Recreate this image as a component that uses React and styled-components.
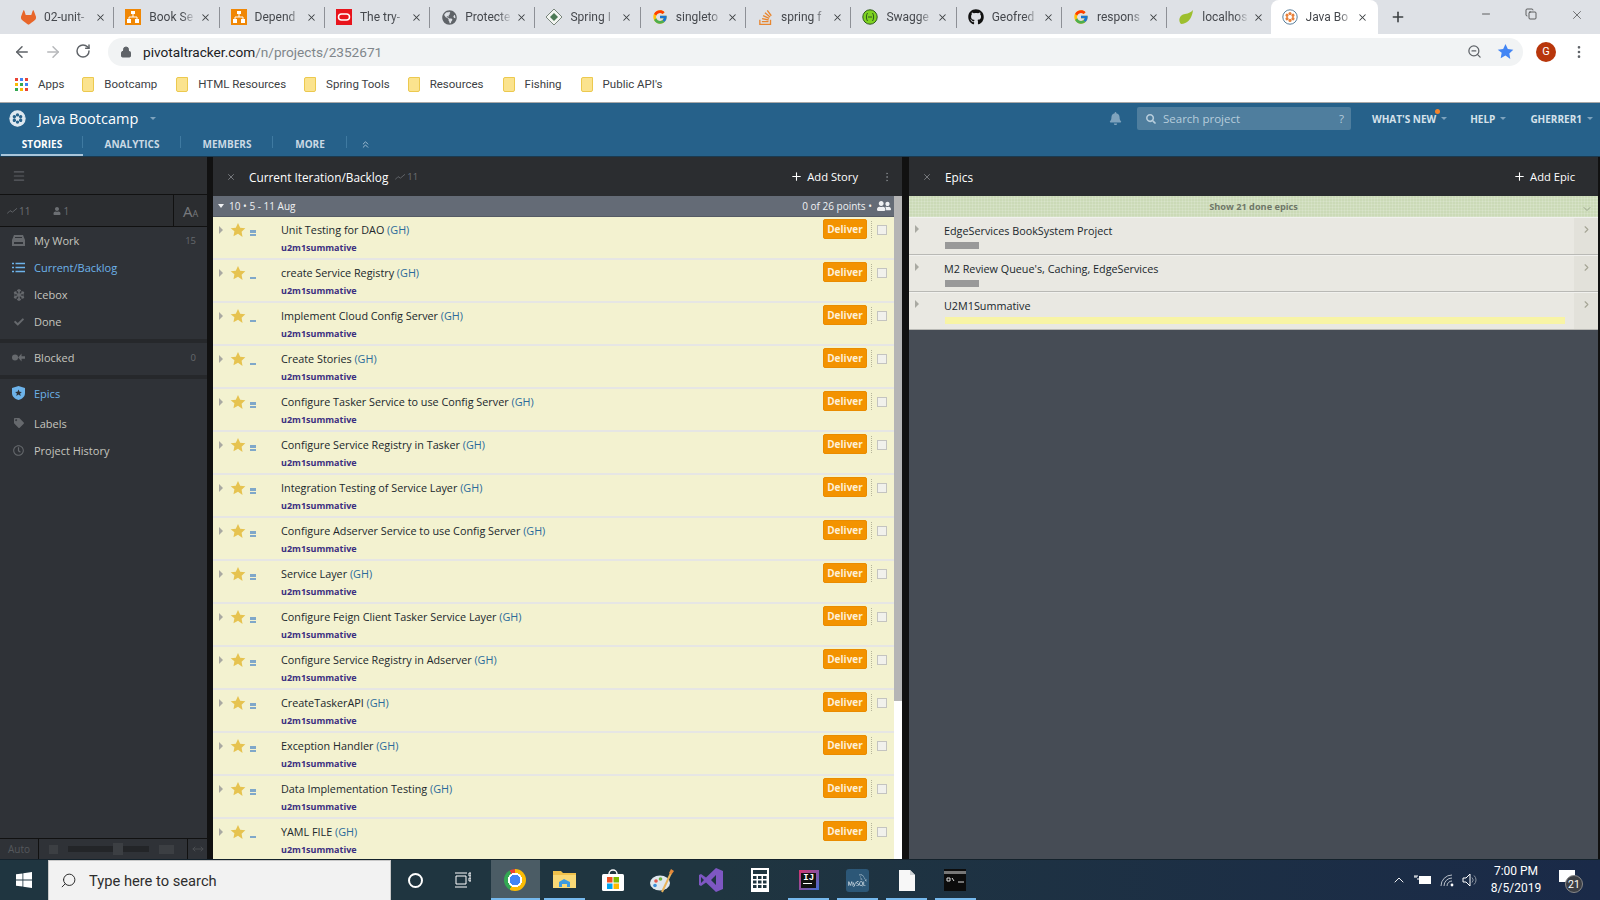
import React from 'react';
import styled, { createGlobalStyle } from 'styled-components';
import { FaGithub, FaGlobeAmericas, FaUserFriends, FaUser, FaBell, FaCheck, FaTag, FaRegClock, FaSearch, FaSnowflake } from 'react-icons/fa';
import { FcGoogle } from 'react-icons/fc';
import { SiGitlab, SiStackoverflow, SiMysql } from 'react-icons/si';
import { ArrowLeft, ArrowRight, RotateCw, Lock, ZoomOut, MoreVertical, Plus, X, Minus, Copy, Menu, ChevronDown, ChevronRight, ChevronsUp, ChevronUp, MoveHorizontal, Search } from 'lucide-react';

const GlobalStyle = createGlobalStyle`
  html, body { margin: 0; padding: 0; background: #fff; }
  * { box-sizing: border-box; }
  #root { width: 1600px; height: 900px; overflow: hidden; }
`;

const Root = styled.div`
  width: 1600px;
  height: 900px;
  display: flex;
  flex-direction: column;
  overflow: hidden;
  font-family: 'Open Sans', 'Liberation Sans', sans-serif;
`;

/* ---- browser chrome ---- */
const TabStrip = styled.div`
  height: 34px;
  flex: none;
  background: #dee1e6;
  display: flex;
  align-items: stretch;
  padding-left: 9px;
  font-family: Roboto, 'Liberation Sans', sans-serif;
`;

const Tab = styled.div`
  position: relative;
  width: ${({ $active }) => ($active ? '107px' : '105.3px')};
  margin-left: ${({ $active }) => ($active ? '-2px' : '0')};
  display: flex;
  align-items: center;
  padding-left: 11px;
  background: ${({ $active }) => ($active ? '#fff' : 'transparent')};
  border-radius: 8px 8px 0 0;
  color: #45484d;

  &::after {
    content: '';
    display: ${({ $sep }) => ($sep ? 'block' : 'none')};
    position: absolute;
    right: 0;
    top: 7px;
    bottom: 6px;
    width: 1px;
    background: #8d9096;
  }
`;

const Favicon = styled.span`
  width: 16px;
  height: 16px;
  flex: none;
  display: flex;
  align-items: center;
  justify-content: center;
`;

const TabTitle = styled.span`
  width: 47px;
  margin-left: 8px;
  font-size: 12px;
  white-space: nowrap;
  overflow: hidden;
  -webkit-mask-image: linear-gradient(to right, #000 70%, transparent 100%);
  mask-image: linear-gradient(to right, #000 70%, transparent 100%);
`;

const TabClose = styled.span`
  margin-left: 4px;
  display: flex;
  color: #3c4043;
`;

const NewTab = styled.span`
  margin-left: 12px;
  display: flex;
  align-items: center;
  color: #3c4043;
`;

const WindowControls = styled.div`
  margin-left: auto;
  display: flex;
  align-items: flex-start;
  padding: 8px 16px 0 0;
  gap: 33px;
  color: #333;
`;

const AddressRow = styled.div`
  height: 34px;
  flex: none;
  background: #fff;
  display: flex;
  align-items: center;
  padding: 1px 12px 0;
`;

const NavButtons = styled.div`
  display: flex;
  gap: 13px;
  width: 96px;
  padding-left: 1px;
  color: #5f6368;
`;

const NavButton = styled.span`
  display: flex;
  color: ${({ $off }) => ($off ? '#b6b8bb' : '#5f6368')};
`;

const Omnibox = styled.div`
  width: 1415px;
  height: 28px;
  border-radius: 14px;
  background: #f1f3f4;
  display: flex;
  align-items: center;
  padding: 0 8px 0 12px;
  font-family: Roboto, 'Liberation Sans', sans-serif;
  font-size: 13.65px;
  color: #202124;
`;

const Url = styled.span`
  margin-left: 11px;
  span { color: #80868b; }
`;

const OmniIcons = styled.div`
  margin-left: auto;
  display: flex;
  align-items: center;
  gap: 15px;
  padding-right: 1px;
`;

const Avatar = styled.span`
  width: 20px;
  height: 20px;
  border-radius: 50%;
  background: #b8360b;
  color: #fff;
  font: 11px Roboto, sans-serif;
  display: flex;
  align-items: center;
  justify-content: center;
  margin-left: 13px;
`;

const MoreButton = styled(MoreVertical)`
  margin-left: 15px;
`;

const BookmarkBar = styled.div`
  height: 35px;
  flex: none;
  background: #fff;
  border-bottom: 1px solid #a8a8a8;
  display: flex;
  align-items: center;
  padding: 0 0 2px 15px;
  font-family: Roboto, 'Liberation Sans', sans-serif;
  font-size: 11.5px;
  color: #3c4043;
`;

const AppsGrid = styled.span`
  width: 13px;
  height: 13px;
  display: grid;
  grid-template-columns: repeat(3, 3px);
  gap: 2px;
  margin-right: 10px;
  i { display: block; width: 3px; height: 3px; }
`;

const Bookmark = styled.span`
  display: flex;
  align-items: center;
  margin-left: ${({ $gap }) => $gap}px;
  white-space: nowrap;
`;

const FolderIcon = styled.span`
  width: 12px;
  height: 15px;
  margin-right: 10px;
  background: #fbe38e;
  border: 1px solid #ecc94f;
  border-radius: 2px 0 2px 2px;
`;

/* ---- tracker header ---- */
const Header = styled.div`
  height: 54px;
  flex: none;
  background: #26618a;
  display: flex;
  flex-direction: column;
  border-bottom: 1px solid #1a3a50;
`;

const HeaderTop = styled.div`
  height: 30px;
  display: flex;
  align-items: center;
  padding: 1px 0 0 9px;
`;

const ProjectTitle = styled.span`
  margin-left: 12px;
  font-size: 14.5px;
  color: #fff;
`;

const TinyCaret = styled.span`
  width: 0;
  height: 0;
  margin-left: ${({ $gap }) => $gap || 6}px;
  border-left: 3px solid transparent;
  border-right: 3px solid transparent;
  border-top: 3px solid #7ea3bd;
`;

const HeaderRight = styled.div`
  margin-left: auto;
  display: flex;
  align-items: center;
  color: #7fa3bd;
`;

const SearchBox = styled.div`
  width: 214px;
  height: 23px;
  margin-left: 15px;
  border-radius: 2px;
  background: #4f7e9e;
  display: flex;
  align-items: center;
  padding: 0 7px 0 9px;
  font-size: 11.5px;
  color: #b7cddc;
`;

const SearchLabel = styled.span`
  margin-left: 7px;
  flex: 1;
`;

const HeaderLink = styled.span`
  position: relative;
  display: flex;
  align-items: center;
  margin-left: ${({ $gap }) => $gap}px;
  font-size: 10px;
  font-weight: 700;
  color: #d5e1ea;
`;

const NoticeDot = styled.i`
  position: absolute;
  left: 63px;
  top: -3px;
  width: 5px;
  height: 5px;
  border-radius: 50%;
  background: #f5842b;
`;

const HeaderEnd = styled.span`
  width: 7px;
`;

const HeaderTabs = styled.div`
  height: 23px;
  display: flex;
  align-items: stretch;
  padding-left: 2px;
`;

const HeaderTab = styled.span`
  position: relative;
  width: ${({ $w }) => $w}px;
  margin-left: ${({ $active }) => ($active ? '-1px' : '0')};
  display: flex;
  align-items: center;
  justify-content: center;
  font-size: 10px;
  font-weight: 700;
  color: ${({ $active }) => ($active ? '#fff' : '#cbd9e4')};
  border-bottom: 2px solid ${({ $active }) => ($active ? '#a8c5da' : 'transparent')};

  &::after {
    content: '';
    position: absolute;
    right: 0;
    top: 3px;
    height: 12px;
    width: 1px;
    background: #3f7aa1;
  }
`;

const CollapseTab = styled.span`
  margin-left: 13px;
  display: flex;
  align-items: center;
  color: #a9c3d6;
`;

/* ---- main area ---- */
const Main = styled.div`
  flex: 1;
  min-height: 0;
  display: flex;
  background: #111;
`;

const Sidebar = styled.div`
  width: 207px;
  flex: none;
  background: #2f3237;
  display: flex;
  flex-direction: column;
  color: #c5c5bf;
  font-size: 11px;
`;

const SideTop = styled.div`
  height: 38px;
  flex: none;
  background: #2c2e31;
  display: flex;
  align-items: center;
  padding-left: 12px;
  color: #5c5f64;
  border-bottom: 1px solid #111;
`;

const SideStats = styled.div`
  height: 32px;
  flex: none;
  display: flex;
  background: #2b2d30;
  border-bottom: 1px solid #111;
  color: #6c6f73;
  font-size: 10px;
`;

const StatCell = styled.div`
  width: 174px;
  display: flex;
  align-items: center;
  padding-left: 7px;
  gap: 23px;
  border-right: 1px solid #111;
  span { display: flex; align-items: center; gap: 2px; }
`;

const FontCell = styled.div`
  flex: 1;
  text-align: center;
  line-height: 33px;
  color: #77797d;
  font-size: 15px;
  small { font-size: 9px; }
`;

const SideGroup = styled.div`
  display: flex;
  flex-direction: column;
  padding-bottom: ${({ $pb }) => $pb || 0}px;
  border-bottom: ${({ $band }) => ($band ? '4px solid #26282b' : 'none')};
`;

const SideItem = styled.div`
  height: ${({ $h }) => $h || 27}px;
  display: flex;
  align-items: center;
  padding: 0 11px 0 12px;
  color: ${({ $on }) => ($on ? '#6db3ea' : '#c5c5bf')};
`;

const SideIcon = styled.span`
  width: 13px;
  height: 13px;
  margin-right: 9px;
  display: flex;
  align-items: center;
  justify-content: center;
  color: ${({ $on }) => ($on ? '#6db3ea' : '#66696d')};
`;

const SideCount = styled.span`
  margin-left: auto;
  color: #66696d;
  font-size: 9.5px;
`;

const SideFooter = styled.div`
  margin-top: auto;
  height: 21px;
  flex: none;
  border-top: 1px solid #111;
  display: flex;
  align-items: center;
  color: #55585c;
  font-size: 10px;
`;

const AutoCell = styled.span`
  width: 39px;
  height: 100%;
  padding-left: 8px;
  line-height: 21px;
  border-right: 1px solid #111;
`;

const SliderCell = styled.span`
  width: 149px;
  height: 100%;
  display: flex;
  align-items: center;
  gap: 10px;
  padding-left: 10px;
  border-right: 1px solid #111;
`;

const SliderIcon = styled.i`
  display: block;
  width: ${({ $w }) => $w}px;
  height: 9px;
  background: #3c3f43;
`;

const SliderTrack = styled.i`
  position: relative;
  display: block;
  width: 81px;
  height: 6px;
  background: #232528;

  &::after {
    content: '';
    position: absolute;
    left: 45px;
    top: -3px;
    width: 10px;
    height: 12px;
    background: #3c3f43;
  }
`;

const ResizeCell = styled.span`
  flex: 1;
  display: flex;
  justify-content: center;
  color: #4a4d51;
`;

const Backlog = styled.div`
  width: 689px;
  margin-left: 6px;
  flex: none;
  display: flex;
  flex-direction: column;
  min-height: 0;
`;

const PanelHeader = styled.div`
  height: 39px;
  flex: none;
  background: #2b2d30;
  display: flex;
  align-items: center;
  padding-left: 13px;
  color: #fff;
  font-size: 11.8px;
`;

const PanelClose = styled.span`
  width: 10px;
  display: flex;
  margin-right: 13px;
  color: #85888c;
`;

const PanelCount = styled.span`
  display: flex;
  align-items: center;
  gap: 2px;
  margin-left: 7px;
  color: #6d7074;
  font-size: 9.5px;
`;

const AddButton = styled.span`
  margin-left: auto;
  display: flex;
  align-items: center;
  gap: 4px;
  font-size: 11.2px;
  padding-right: ${({ $pr }) => $pr}px;
`;

const KebabDots = styled.span`
  display: flex;
  margin-right: 9px;
  color: #777a7e;
`;

const BacklogBody = styled.div`
  flex: 1;
  min-height: 0;
  display: flex;
`;

const StoryColumn = styled.div`
  flex: 1;
  min-width: 0;
  overflow: hidden;
`;

const IterationBar = styled.div`
  height: 21px;
  background: #646b76;
  border-bottom: 1px solid #555b65;
  display: flex;
  align-items: center;
  padding: 0 3px 0 5px;
  color: #f0f1f3;
  font-size: 10px;
`;

const DownCaret = styled.i`
  width: 0;
  height: 0;
  margin-right: 5px;
  border-left: 3.5px solid transparent;
  border-right: 3.5px solid transparent;
  border-top: 4px solid #f0f1f3;
`;

const IterationPoints = styled.span`
  margin-left: auto;
  display: flex;
  align-items: center;
  gap: 5px;
`;

const StoryRow = styled.div`
  height: 43px;
  background: #f3f2d0;
  border-bottom: 2px solid #e6e6e4;
  display: flex;
  align-items: flex-start;
  padding-right: 7px;
  overflow: hidden;
`;

const Expander = styled.i`
  flex: none;
  width: 0;
  height: 0;
  margin: ${({ $top }) => $top || 9}px ${({ $after }) => $after || 7}px 0 ${({ $before }) => $before || 6}px;
  border-top: 4px solid transparent;
  border-bottom: 4px solid transparent;
  border-left: 4px solid #a9a9a2;
`;

const StarSlot = styled.span`
  flex: none;
  width: 16px;
  height: 16px;
  margin-top: 5px;
  display: flex;
`;

const Estimate = styled.span`
  flex: none;
  width: 6px;
  height: 6px;
  margin: 13px 0 0 4px;
  display: flex;
  flex-direction: column;
  justify-content: flex-end;
  gap: 1px;
  i { display: block; height: 2.5px; background: #7fa8c9; }
`;

const StoryText = styled.div`
  margin-left: 25px;
  padding-top: 5px;
`;

const StoryName = styled.div`
  font-size: 10.8px;
  line-height: 15px;
  color: #20272c;
  span { color: #2b6b9b; }
`;

const StoryLabel = styled.div`
  margin-top: 4px;
  font-size: 9px;
  line-height: 14px;
  font-weight: 700;
  color: #3b2f80;
`;

const RowActions = styled.div`
  margin-left: auto;
  display: flex;
  align-items: flex-start;
  padding-top: 2px;
`;

const DeliverButton = styled.span`
  width: 44px;
  height: 20px;
  border-radius: 2px;
  background: #f39300;
  border: 1px solid #ea8c00;
  color: #fdf0d8;
  font-size: 10px;
  font-weight: 700;
  display: flex;
  align-items: center;
  justify-content: center;
`;

const CheckBox = styled.span`
  width: 10px;
  height: 10px;
  margin: 6px 0 0 5px;
  padding: 0;
  background: #f1f1ec;
  border: 1px solid #c4c4c0;
`;

const DottedRule = styled.i`
  display: block;
  height: 17px;
  margin: 2px 0 0 4px;
  border-left: 1px dotted #b5b49a;
`;

const ScrollTrack = styled.div`
  width: 8px;
  flex: none;
  background: #fff;
`;

const ScrollThumb = styled.div`
  height: 505px;
  background: #b5b5b5;
`;

const Epics = styled.div`
  width: 689px;
  margin-left: 7px;
  flex: none;
  display: flex;
  flex-direction: column;
  background: #464c55;
`;

const DoneBar = styled.div`
  height: 21px;
  flex: none;
  position: relative;
  display: flex;
  align-items: center;
  justify-content: center;
  font-size: 9.2px;
  font-weight: 700;
  color: #6f7768;
  background-color: #cbdab7;
  background-image:
    repeating-linear-gradient(0deg, rgba(255, 255, 255, 0.14) 0 1px, transparent 1px 3px),
    repeating-linear-gradient(90deg, rgba(255, 255, 255, 0.14) 0 1px, transparent 1px 3px);
`;

const DoneChevron = styled.span`
  position: absolute;
  right: 5px;
  top: 7px;
  display: flex;
  color: #9aa68c;
`;

const EpicRow = styled.div`
  height: 37.5px;
  flex: none;
  display: flex;
  background: #e9e8e2;
  border-bottom: 1px solid #b9b9b5;
  border-top: 1px solid #f1f1ee;
`;

const EpicMain = styled.div`
  flex: 1;
  min-width: 0;
  display: flex;
  padding-right: 9px;
`;

const EpicBody = styled.div`
  flex: 1;
  margin-left: 18px;
  padding-top: 5px;
`;

const EpicName = styled.div`
  font-size: 10.8px;
  line-height: 15px;
  color: #20272c;
`;

const EpicBar = styled.div`
  height: 7px;
  margin: 4px 0 0 1px;
  width: ${({ $full }) => ($full ? '620px' : '34px')};
  background: ${({ $full }) => ($full ? '#f8f4a5' : '#999')};
`;

const EpicSide = styled.div`
  width: 24px;
  flex: none;
  background: #e2e1da;
  display: flex;
  justify-content: center;
  padding-top: 6px;
  color: #a5a595;
`;

const EpicsRest = styled.div`
  flex: 1;
`;

/* ---- taskbar ---- */
const Taskbar = styled.div`
  height: 41px;
  flex: none;
  border-top: 1px solid #14222c;
  background: linear-gradient(to right, #1f3540 0%, #1f3540 45%, #1a2a48 100%);
  display: flex;
  align-items: stretch;
  color: #fff;
  font-family: Roboto, 'Liberation Sans', sans-serif;
`;

const StartButton = styled.span`
  width: 48px;
  flex: none;
  display: flex;
  align-items: center;
  justify-content: center;
`;

const TaskSearch = styled.div`
  width: 343px;
  flex: none;
  background: #f2f2f2;
  border: 1px solid #c8c8c8;
  border-bottom: 0;
  display: flex;
  align-items: center;
  padding-left: 11px;
  color: #2d2d2d;
  font-size: 14.7px;
`;

const TaskSearchLabel = styled.span`
  margin-left: 12px;
`;

const TaskUtility = styled.span`
  width: 48px;
  flex: none;
  display: flex;
  align-items: center;
  justify-content: center;
`;

const CortanaRing = styled.i`
  width: 15px;
  height: 15px;
  border: 2px solid #fff;
  border-radius: 50%;
`;

const MirroredSearch = styled(Search)`
  transform: scaleX(-1);
`;

const TaskApps = styled.div`
  margin-left: 4px;
  display: flex;
`;

const TaskApp = styled.span`
  position: relative;
  width: 48.9px;
  display: flex;
  align-items: center;
  justify-content: center;
  background: ${({ $active }) => ($active ? '#4b5c65' : 'transparent')};

  &::after {
    content: '';
    display: ${({ $open }) => ($open ? 'block' : 'none')};
    position: absolute;
    bottom: 0;
    left: ${({ $active }) => ($active ? '0' : '4px')};
    right: ${({ $active }) => ($active ? '0' : '4px')};
    height: 2px;
    background: #76b9ed;
  }
`;

const ChromeBall = styled.i`
  width: 22px;
  height: 22px;
  border-radius: 50%;
  background:
    radial-gradient(closest-side, #4285f4 0 48%, #fff 50% 64%, transparent 66%),
    conic-gradient(#fbbc05 90deg 210deg, #34a853 210deg 330deg, #ea4335 330deg 360deg, #ea4335 0 90deg);
`;

const BoxIcon = styled.span`
  width: ${({ $s }) => $s || 20}px;
  height: ${({ $s }) => $s || 20}px;
  display: flex;
  align-items: center;
  justify-content: center;
  background: ${({ $bg }) => $bg};
  border-radius: ${({ $r }) => $r || 0}px;
`;

const IdeaInner = styled.span`
  width: 15px;
  height: 15px;
  background: #111;
  padding-left: 2px;
`;

const IdeaText = styled.span`
  display: block;
  font: 700 9px/10px 'Liberation Mono', monospace;
  color: #fff;
  width: 9px;
  border-bottom: 1px solid #fff;
`;

const Tray = styled.div`
  margin-left: auto;
  display: flex;
  align-items: center;
  padding-right: 14px;
`;

const TrayIcon = styled.span`
  display: flex;
  margin-right: ${({ $gap }) => $gap}px;
`;

const Clock = styled.div`
  width: 72px;
  text-align: center;
  font-size: 12px;
  line-height: 17px;
`;

const NoteWrap = styled.span`
  position: relative;
  width: 26px;
  height: 28px;
  margin-left: 5px;
  margin-right: 3px;
`;

const NoteBubble = styled.i`
  position: absolute;
  left: 2px;
  top: 4px;
  width: 16px;
  height: 12px;
  background: #fff;
`;

const NoteBadge = styled.span`
  position: absolute;
  left: 8px;
  top: 9px;
  width: 18px;
  height: 18px;
  border-radius: 50%;
  background: #3c3f44;
  border: 1px solid #888;
  font-size: 10.5px;
  display: flex;
  align-items: center;
  justify-content: center;
`;

/* ---- drawings ---- */
const StarIcon = ({ size = 16, color = '#e6c350' }) => (
  <svg width={size} height={size} viewBox="0 0 24 24">
    <path fill={color} d="M12 1.5l3.3 7 7.7 1-5.6 5.3 1.4 7.7L12 17.8l-6.8 3.7 1.4-7.7L1 9.500l7.700-1z" />
  </svg>
);

const TrackerMark = ({ size = 16, ring = '#dfe9f0', petal = '#26618a', fill = '#dfe9f0' }) => (
  <svg width={size} height={size} viewBox="0 0 16 16">
    <circle cx="8" cy="8" r="7.2" fill={fill} stroke={ring} />
    {[0, 60, 120, 180, 240, 300].map(a => (
      <circle key={a} cx="8" cy="4.6" r="1.6" fill={petal} transform={`rotate(${a} 8 8)`} />
    ))}
  </svg>
);

const PointsGlyph = ({ color = '#5f6266' }) => (
  <svg width="10" height="8" viewBox="0 0 13 9">
    <path d="M0 8l4-4 3 2 6-5" fill="none" stroke={color} strokeWidth="1.3" />
  </svg>
);

const TreeSquare = () => (
  <svg width="16" height="16" viewBox="0 0 16 16">
    <rect width="16" height="16" fill="#f08705" />
    <path d="M8 4v4M4 11V8h8v3" fill="none" stroke="#fff" />
    <rect x="6" y="2" width="4" height="3" fill="#fff" />
    <rect x="2" y="10" width="4" height="4" fill="#fff" />
    <rect x="10" y="10" width="4" height="4" fill="#fff" />
  </svg>
);

const OracleSquare = () => (
  <svg width="16" height="16" viewBox="0 0 16 16">
    <rect width="16" height="16" fill="#e8141c" />
    <rect x="2.5" y="5" width="11" height="6" rx="3" fill="none" stroke="#fff" strokeWidth="1.5" />
  </svg>
);

const SpringDiamond = () => (
  <svg width="16" height="16" viewBox="0 0 16 16">
    <path d="M8 0l8 8-8 8-8-8z" fill="#f3f5f1" stroke="#5c6b60" strokeWidth=".8" />
    <path d="M8 4l4 4-4 4-4-4z" fill="#4d7a55" />
  </svg>
);

const SwaggerMark = () => (
  <svg width="16" height="16" viewBox="0 0 16 16">
    <circle cx="8" cy="8" r="7.2" fill="#7ed321" stroke="#2f5a1c" />
    <path d="M5.500 4C4 6 4 10 5.500 12M10.500 4c1.500 2 1.500 6 0 8M6 8h4" fill="none" stroke="#2f5a1c" />
  </svg>
);

const Leaf = () => (
  <svg width="16" height="16" viewBox="0 0 16 16">
    <path d="M15 1C14 10 9 15 3 15 0 12 1 6 7 5c4-.6 6-2 8-4z" fill="#9dbf2e" />
  </svg>
);

const FolderTask = () => (
  <svg width="23" height="20" viewBox="0 0 23 20">
    <path d="M0 1h8l2 2h13v15H0z" fill="#f0c14b" />
    <path d="M0 5h23v13H0z" fill="#f9d976" />
    <path d="M6 17v-5l5-3 6 3v5h-3v-3H9v3z" fill="#3d9be0" />
  </svg>
);

const StoreBag = () => (
  <svg width="24" height="24" viewBox="0 0 24 24">
    <path d="M8 6a4 4 0 018 0" fill="none" stroke="#fff" strokeWidth="1.4" />
    <rect x="1" y="6" width="22" height="17" rx="1.5" fill="#fff" />
    <rect x="6" y="9" width="5.5" height="5.5" fill="#f25022" />
    <rect x="12.5" y="9" width="5.5" height="5.5" fill="#7fba00" />
    <rect x="6" y="15.5" width="5.5" height="5.5" fill="#00a4ef" />
    <rect x="12.5" y="15.5" width="5.5" height="5.5" fill="#ffb900" />
  </svg>
);

const Palette = () => (
  <svg width="25" height="25" viewBox="0 0 25 25">
    <ellipse cx="10" cy="15" rx="10" ry="7.5" fill="#dfe7ee" />
    <circle cx="6" cy="13" r="1.8" fill="#e2574c" />
    <circle cx="10.5" cy="11" r="1.8" fill="#6cb33f" />
    <circle cx="5" cy="17.5" r="1.8" fill="#3d8fd9" />
    <path d="M12 24L21 5" stroke="#e9b45c" strokeWidth="2" />
    <path d="M19 5l2-4 3 2-2.5 3.5z" fill="#e58a3a" />
  </svg>
);

const VsMark = () => (
  <svg width="24" height="24" viewBox="0 0 24 24">
    <path d="M17 0l7 3v18l-7 3-10-9.5L2 18l-2-1V7l2-1 5 3.5zM17 7l-5 5 5 5zM2 9v6l3-3z" fill="#7e57c2" fillRule="evenodd" />
  </svg>
);

const CalcMark = () => (
  <svg width="18" height="24" viewBox="0 0 18 24">
    <rect width="18" height="24" fill="#fff" />
    <rect x="2" y="2" width="14" height="4" fill="#1f3540" />
    {[8, 12.5, 17].map(y => [2, 7, 12].map(x => (
      <rect key={`${x}-${y}`} x={x} y={y} width="3.5" height="3" fill="#1f3540" />
    )))}
  </svg>
);

const PageMark = () => (
  <svg width="16" height="21" viewBox="0 0 16 21">
    <path d="M0 0h11l5 5v16H0z" fill="#f7f7f7" />
    <path d="M11 0l5 5h-5z" fill="#cfd3d6" />
  </svg>
);

const CmdMark = () => (
  <BoxIcon $s={22} $bg="#0c0c0c">
    <svg width="22" height="18" viewBox="0 0 22 18">
      <rect width="22" height="3" fill="#777" />
      <path d="M3 7h3v3H3zM8 7l2 3M14 11h6" stroke="#ddd" fill="none" />
    </svg>
  </BoxIcon>
);

const WinLogo = () => (
  <svg width="16" height="16" viewBox="0 0 16 16">
    <path fill="#fff" d="M0 2.3l6.5-.9v6.2H0zM7.3 1.3L16 0v7.6H7.3zM0 8.4h6.5v6.2L0 13.7zM7.3 8.4H16V16l-8.7-1.2z" />
  </svg>
);

const TaskViewMark = () => (
  <svg width="16" height="16" viewBox="0 0 16 16">
    <path d="M0 1h12M0 15h12M1 4h10v8H1zM14 1h2v3h-2zM14 6h2v3h-2z" stroke="#fff" fill="none" />
  </svg>
);

const BatteryMark = () => (
  <svg width="18" height="12" viewBox="0 0 18 12">
    <path d="M0 3h3V1M1 1v2M3 5h2" stroke="#fff" fill="none" />
    <rect x="5" y="2" width="12" height="8" fill="#fff" />
  </svg>
);

const WifiMark = () => (
  <svg width="14" height="13" viewBox="0 0 14 13">
    <path d="M1 12a11 11 0 0111-11M4 12a8 8 0 018-8M7 12a5 5 0 015-5" stroke="#b9c0c9" fill="none" />
    <circle cx="12" cy="11" r="1.4" fill="#fff" />
  </svg>
);

const VolumeMark = () => (
  <svg width="16" height="14" viewBox="0 0 16 14">
    <path d="M1 5h3l4-4v12l-4-4H1z" fill="none" stroke="#fff" />
    <path d="M10 4.500a3.500 3.500 0 010 5M12 2.500a6 6 0 010 9" fill="none" stroke="#8a93a0" />
  </svg>
);

const DrawerIcon = () => (
  <svg width="13" height="13" viewBox="0 0 13 13">
    <path fill="#66696d" d="M2 1h9l2 5v6H0V6zM3 3v1h7V3zM2 8v2h9V8z" fillRule="evenodd" />
  </svg>
);

const ListIcon = () => (
  <svg width="13" height="11" viewBox="0 0 13 11">
    <path stroke="#6db3ea" strokeWidth="1.6" d="M0 1.500h2M3.500 1.500H13M0 5.500h2M3.500 5.500H13M0 9.500h2M3.500 9.500H13" />
  </svg>
);

const BlockedIcon = () => (
  <svg width="15" height="9" viewBox="0 0 15 9">
    <circle cx="3.5" cy="4.5" r="3.5" fill="#66696d" />
    <path d="M15 3v3h-4v3L7 4.500 11 0v3z" fill="#66696d" />
  </svg>
);

const ShieldIcon = () => (
  <svg width="13" height="14" viewBox="0 0 13 14">
    <path d="M6.500 0L13 2v5c0 3.500-2.500 5.800-6.500 7C2.500 12.800 0 10.500 0 7V2z" fill="#6db3ea" />
    <path d="M6.500 3.500l1 2.200 2.400.2-1.800 1.600.6 2.400-2.200-1.300-2.200 1.300.6-2.400L3.100 5.900l2.400-.2z" fill="#2f3237" />
  </svg>
);

/* ---- data ---- */
const tabs = [
  { title: '02-unit-', icon: <SiGitlab size={15} color="#e8662a" /> },
  { title: 'Book Se', icon: <TreeSquare /> },
  { title: 'Depend', icon: <TreeSquare /> },
  { title: 'The try-', icon: <OracleSquare /> },
  { title: 'Protecte', icon: <FaGlobeAmericas size={15} color="#5f6368" /> },
  { title: 'Spring I', icon: <SpringDiamond /> },
  { title: 'singleto', icon: <FcGoogle size={16} /> },
  { title: 'spring f', icon: <SiStackoverflow size={15} color="#e8862f" /> },
  { title: 'Swagge', icon: <SwaggerMark /> },
  { title: 'Geofred', icon: <FaGithub size={16} color="#111" /> },
  { title: 'respons', icon: <FcGoogle size={16} /> },
  { title: 'localhos', icon: <Leaf /> },
  { title: 'Java Bo', icon: <TrackerMark ring="#5b7f9b" fill="#fff" petal="#e8813a" />, active: true },
];

const bookmarks = [
  { name: 'Bootcamp', gap: 18 },
  { name: 'HTML Resources', gap: 19 },
  { name: 'Spring Tools', gap: 18 },
  { name: 'Resources', gap: 18 },
  { name: 'Fishing', gap: 19 },
  { name: 'Public API\'s', gap: 19 },
];

const appDots = ['#ea4335', '#4285f4', '#ea4335', '#fbbc05', '#34a853', '#4285f4', '#34a853', '#fbbc05', '#ea4335'];

const stories = [
  ['Unit Testing for DAO', 2],
  ['create Service Registry', 1],
  ['Implement Cloud Config Server', 1],
  ['Create Stories', 1],
  ['Configure Tasker Service to use Config Server', 2],
  ['Configure Service Registry in Tasker ', 2],
  ['Integration Testing of Service Layer', 2],
  ['Configure Adserver Service to use Config Server', 2],
  ['Service Layer', 2],
  ['Configure Feign Client Tasker Service Layer', 2],
  ['Configure Service Registry in Adserver', 2],
  ['CreateTaskerAPI', 2],
  ['Exception Handler', 2],
  ['Data Implementation Testing', 2],
  ['YAML FILE', 1],
];

const epics = [
  { name: 'EdgeServices BookSystem Project' },
  { name: 'M2 Review Queue\'s, Caching, EdgeServices' },
  { name: 'U2M1Summative', full: true },
];

const taskApps = [
  { icon: <ChromeBall />, open: true, active: true },
  { icon: <FolderTask />, open: true },
  { icon: <StoreBag /> },
  { icon: <Palette /> },
  { icon: <VsMark /> },
  { icon: <CalcMark /> },
  { icon: <BoxIcon $s={20} $bg="linear-gradient(135deg, #d6336c, #3f6fd6)"><IdeaInner><IdeaText>IJ</IdeaText></IdeaInner></BoxIcon>, open: true },
  { icon: <BoxIcon $s={23} $r={3} $bg="#2c5777"><SiMysql size={19} color="#dfe8ee" /></BoxIcon>, open: true },
  { icon: <PageMark />, open: true },
  { icon: <CmdMark />, open: true },
];

const StoryItem = ({ name, bars }) => (
  <StoryRow>
    <Expander />
    <StarSlot><StarIcon /></StarSlot>
    <Estimate>
      {Array.from({ length: bars }).map((_, i) => <i key={i} />)}
    </Estimate>
    <StoryText>
      <StoryName>{name} <span>(GH)</span></StoryName>
      <StoryLabel>u2m1summative</StoryLabel>
    </StoryText>
    <RowActions>
      <DeliverButton>Deliver</DeliverButton>
      <DottedRule />
      <CheckBox />
    </RowActions>
  </StoryRow>
);

export default function App() {
  return (
    <Root>
      <GlobalStyle />

      <TabStrip>
        {tabs.map((tab, i) => (
          <Tab key={i} $active={tab.active} $sep={i < 11}>
            <Favicon>{tab.icon}</Favicon>
            <TabTitle>{tab.title}</TabTitle>
            <TabClose><X size={11} strokeWidth={2.2} /></TabClose>
          </Tab>
        ))}
        <NewTab><Plus size={16} strokeWidth={2.4} /></NewTab>
        <WindowControls>
          <Minus size={12} strokeWidth={1.5} />
          <Copy size={12} strokeWidth={1.5} />
          <X size={14} strokeWidth={1.1} />
        </WindowControls>
      </TabStrip>

      <AddressRow>
        <NavButtons>
          <NavButton><ArrowLeft size={18} /></NavButton>
          <NavButton $off><ArrowRight size={18} /></NavButton>
          <NavButton><RotateCw size={16} strokeWidth={2.2} /></NavButton>
        </NavButtons>
        <Omnibox>
          <Lock size={12} fill="#5f6368" color="#5f6368" />
          <Url>pivotaltracker.com<span>/n/projects/2352671</span></Url>
          <OmniIcons>
            <ZoomOut size={15} color="#5f6368" />
            <StarIcon size={17} color="#4285f4" />
          </OmniIcons>
        </Omnibox>
        <Avatar>G</Avatar>
        <MoreButton size={16} color="#5f6368" />
      </AddressRow>

      <BookmarkBar>
        <AppsGrid>
          {appDots.map((c, i) => <i key={i} style={{ background: c }} />)}
        </AppsGrid>
        <span>Apps</span>
        {bookmarks.map(b => (
          <Bookmark key={b.name} $gap={b.gap}>
            <FolderIcon />
            {b.name}
          </Bookmark>
        ))}
      </BookmarkBar>

      <Header>
        <HeaderTop>
          <TrackerMark size={17} />
          <ProjectTitle>Java Bootcamp</ProjectTitle>
          <TinyCaret $gap={12} />
          <HeaderRight>
            <FaBell size={13} />
            <SearchBox>
              <FaSearch size={10} />
              <SearchLabel>Search project</SearchLabel>
              <span>?</span>
            </SearchBox>
            <HeaderLink $gap={21}>WHAT'S NEW<NoticeDot /><TinyCaret $gap={5} /></HeaderLink>
            <HeaderLink $gap={23}>HELP<TinyCaret $gap={5} /></HeaderLink>
            <HeaderLink $gap={24}>GHERRER1<TinyCaret $gap={5} /></HeaderLink>
            <HeaderEnd />
          </HeaderRight>
        </HeaderTop>
        <HeaderTabs>
          <HeaderTab $w={82} $active>STORIES</HeaderTab>
          <HeaderTab $w={98}>ANALYTICS</HeaderTab>
          <HeaderTab $w={92}>MEMBERS</HeaderTab>
          <HeaderTab $w={74}>MORE</HeaderTab>
          <CollapseTab><ChevronsUp size={11} /></CollapseTab>
        </HeaderTabs>
      </Header>

      <Main>
        <Sidebar>
          <SideTop><Menu size={14} /></SideTop>
          <SideStats>
            <StatCell>
              <span><PointsGlyph />11</span>
              <span><FaUser size={8} />1</span>
            </StatCell>
            <FontCell>A<small>A</small></FontCell>
          </SideStats>
          <SideGroup $band $pb={4}>
            <SideItem><SideIcon><DrawerIcon /></SideIcon>My Work<SideCount>15</SideCount></SideItem>
            <SideItem $on><SideIcon><ListIcon /></SideIcon>Current/Backlog</SideItem>
            <SideItem><SideIcon><FaSnowflake size={12} /></SideIcon>Icebox</SideItem>
            <SideItem><SideIcon><FaCheck size={10} /></SideIcon>Done</SideItem>
          </SideGroup>
          <SideGroup $band $pb={4}>
            <SideItem $h={28}><SideIcon><BlockedIcon /></SideIcon>Blocked<SideCount>0</SideCount></SideItem>
          </SideGroup>
          <SideGroup>
            <SideItem $h={28} $on><SideIcon><ShieldIcon /></SideIcon>Epics</SideItem>
            <SideItem $h={32}><SideIcon><FaTag size={10} /></SideIcon>Labels</SideItem>
            <SideItem $h={22}><SideIcon><FaRegClock size={11} /></SideIcon>Project History</SideItem>
          </SideGroup>
          <SideFooter>
            <AutoCell>Auto</AutoCell>
            <SliderCell>
              <SliderIcon $w={9} />
              <SliderTrack />
              <SliderIcon $w={15} />
            </SliderCell>
            <ResizeCell><MoveHorizontal size={12} /></ResizeCell>
          </SideFooter>
        </Sidebar>

        <Backlog>
          <PanelHeader>
            <PanelClose><X size={10} /></PanelClose>
            Current Iteration/Backlog
            <PanelCount><PointsGlyph />11</PanelCount>
            <AddButton $pr={23}><Plus size={13} strokeWidth={2} />Add Story</AddButton>
            <KebabDots><MoreVertical size={12} /></KebabDots>
          </PanelHeader>
          <BacklogBody>
            <StoryColumn>
              <IterationBar>
                <DownCaret />
                10 • 5 - 11 Aug
                <IterationPoints>0 of 26 points • <FaUserFriends size={14} /></IterationPoints>
              </IterationBar>
              {stories.map(([name, bars]) => <StoryItem key={name} name={name} bars={bars} />)}
            </StoryColumn>
            <ScrollTrack><ScrollThumb /></ScrollTrack>
          </BacklogBody>
        </Backlog>

        <Epics>
          <PanelHeader>
            <PanelClose><X size={10} /></PanelClose>
            Epics
            <AddButton $pr={23}><Plus size={13} strokeWidth={2} />Add Epic</AddButton>
          </PanelHeader>
          <DoneBar>
            Show 21 done epics
            <DoneChevron><ChevronDown size={12} /></DoneChevron>
          </DoneBar>
          {epics.map(e => (
            <EpicRow key={e.name}>
              <EpicMain>
                <Expander $top={7} $before={6} $after={0} />
                <EpicBody>
                  <EpicName>{e.name}</EpicName>
                  <EpicBar $full={e.full} />
                </EpicBody>
              </EpicMain>
              <EpicSide><ChevronRight size={11} strokeWidth={2.5} /></EpicSide>
            </EpicRow>
          ))}
          <EpicsRest />
        </Epics>
      </Main>

      <Taskbar>
        <StartButton><WinLogo /></StartButton>
        <TaskSearch>
          <MirroredSearch size={17} strokeWidth={1.4} />
          <TaskSearchLabel>Type here to search</TaskSearchLabel>
        </TaskSearch>
        <TaskUtility><CortanaRing /></TaskUtility>
        <TaskUtility><TaskViewMark /></TaskUtility>
        <TaskApps>
          {taskApps.map((app, i) => (
            <TaskApp key={i} $open={app.open} $active={app.active}>{app.icon}</TaskApp>
          ))}
        </TaskApps>
        <Tray>
          <TrayIcon $gap={7}><ChevronUp size={16} strokeWidth={1.4} /></TrayIcon>
          <TrayIcon $gap={8}><BatteryMark /></TrayIcon>
          <TrayIcon $gap={8}><WifiMark /></TrayIcon>
          <TrayIcon $gap={2}><VolumeMark /></TrayIcon>
          <Clock>7:00 PM<br />8/5/2019</Clock>
          <NoteWrap>
            <NoteBubble />
            <NoteBadge>21</NoteBadge>
          </NoteWrap>
        </Tray>
      </Taskbar>
    </Root>
  );
}
